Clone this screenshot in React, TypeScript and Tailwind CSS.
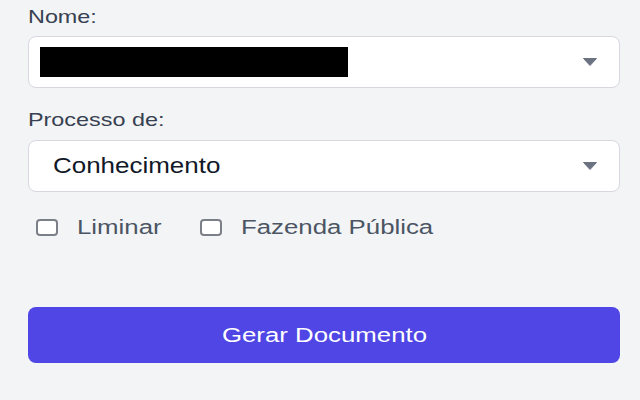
const FONT = { fontFamily: '"Liberation Sans", Arial, sans-serif' };

function Caret() {
  return (
    <svg width="14" height="8" viewBox="0 0 14 8" className="shrink-0">
      <path d="M0.5 0.5 L13.5 0.5 L7 7.5 Z" fill="#6b7280" stroke="#6b7280" strokeLinejoin="round" />
    </svg>
  );
}

function Label({ text }: { text: string }) {
  return (
    <div className="h-[24px]">
      <span className="inline-block text-[19px] leading-[24px] text-[#374151] origin-left scale-x-[1.23]">{text}</span>
    </div>
  );
}

function Check({ label }: { label: string }) {
  return (
    <label className="flex items-center gap-[19px]">
      <span className="w-[22px] h-[17px] rounded-[4px] border-2 border-[#7b7f87] bg-white" />
      <span className="text-[20px] leading-[24px] text-[#4b5563] origin-left scale-x-[1.29] inline-block">{label}</span>
    </label>
  );
}

export default function App() {
  return (
    <div className="w-[640px] h-[400px] overflow-hidden bg-[#f3f4f6] pl-[28px] pr-[20px] pt-[5px]" style={FONT}>
      <Label text="Nome:" />
      <div className="mt-[7px] h-[52px] flex items-center justify-between rounded-lg border border-[#d6d8de] bg-white pl-[11px] pr-[22px]">
        <div className="w-[308px] h-[30px] bg-black" />
        <Caret />
      </div>

      <div className="mt-[20px]">
        <Label text="Processo de:" />
      </div>
      <div className="mt-[8px] h-[52px] flex items-center justify-between rounded-lg border border-[#d6d8de] bg-white pl-[24px] pr-[22px]">
        <span className="inline-block text-[22px] leading-[28px] text-[#111827] origin-left scale-x-[1.18]">Conhecimento</span>
        <Caret />
      </div>

      <div className="mt-[23px] h-[24px] flex items-center gap-[57px] pl-[8px]">
        <Check label="Liminar" />
        <Check label="Fazenda Pública" />
      </div>

      <button className="mt-[68px] w-full h-[56px] rounded-lg bg-[#4f46e5] text-white">
        <span className="inline-block text-[20px] scale-x-[1.29]">Gerar Documento</span>
      </button>
    </div>
  );
}
